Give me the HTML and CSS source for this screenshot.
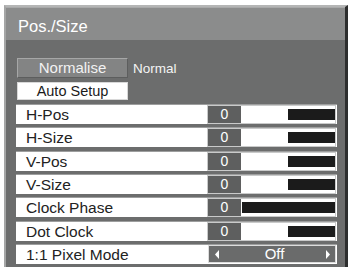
FILE: index.html
```html
<!DOCTYPE html>
<html>
<head>
<meta charset="utf-8">
<link rel="stylesheet" href="styles.css">
</head>
<body>
<div class="frame">
  <div class="title">Pos./Size</div>
  <div class="content">
    <div class="btn-line">
      <div class="btn btn-gray">Normalise</div>
      <span class="status">Normal</span>
    </div>
    <div class="btn btn-white">Auto Setup</div>
    <div class="rows">
      <div class="row"><span class="label">H-Pos</span>
        <div class="slider"><div class="val">0</div><div class="track"><div class="bar" style="width:47px"></div></div></div></div>
      <div class="row"><span class="label">H-Size</span>
        <div class="slider"><div class="val">0</div><div class="track"><div class="bar" style="width:47px"></div></div></div></div>
      <div class="row"><span class="label">V-Pos</span>
        <div class="slider"><div class="val">0</div><div class="track"><div class="bar" style="width:47px"></div></div></div></div>
      <div class="row"><span class="label">V-Size</span>
        <div class="slider"><div class="val">0</div><div class="track"><div class="bar" style="width:47px"></div></div></div></div>
      <div class="row"><span class="label">Clock Phase</span>
        <div class="slider"><div class="val">0</div><div class="track"><div class="bar" style="width:93px"></div></div></div></div>
      <div class="row"><span class="label">Dot Clock</span>
        <div class="slider"><div class="val">0</div><div class="track"><div class="bar" style="width:47px"></div></div></div></div>
      <div class="row"><span class="label">1:1 Pixel Mode</span>
        <div class="select">
          <svg class="arr" width="4" height="9" viewBox="0 0 4 9"><path d="M4 0 L0 4.5 L4 9 Z" fill="#fff"/></svg>
          <span class="opt">Off</span>
          <svg class="arr" width="4" height="9" viewBox="0 0 4 9"><path d="M0 0 L4 4.5 L0 9 Z" fill="#fff"/></svg>
        </div></div>
    </div>
  </div>
</div>
</body>
</html>
```
FILE: styles.css
```css
html, body {
  margin: 0;
  padding: 0;
  background: #fff;
  font-family: "Liberation Sans", Arial, sans-serif;
  overflow: hidden;
}
.frame {
  margin: 5px 0 0 4px;
  width: 339px;
  border-left: 2px solid #a5a6a6;
  border-top: 2px solid #b4b5b5;
  border-right: 3px solid #2d2e2e;
  background: #6c6d6d;
  height: 270px;
}
.title {
  box-sizing: border-box;
  height: 33px;
  padding-top: 5px;
  border-top: 1px solid #a8a9a9;
  background: #8b8c8c;
  color: #fff;
  font-size: 16.5px;
  line-height: 26px;
  padding-left: 12px;
}
.content {
  padding: 18px 8px 0 10px;
}
.btn-line {
  display: flex;
  align-items: center;
  height: 20px;
}
.btn {
  box-sizing: border-box;
  width: 111px;
  margin-left: 1px;
  text-align: center;
}
.btn-gray {
  height: 20px;
  background: #838484;
  border: 1px solid #a6a7a7;
  border-right-color: #5d5e5e;
  border-bottom-color: #5d5e5e;
  color: #f2f2f2;
  font-size: 15px;
  line-height: 18px;
}
.status {
  margin-left: 5px;
  color: #f4f4f4;
  font-size: 13.5px;
}
.btn-white {
  margin-top: 4px;
  height: 18px;
  background: #fff;
  border: 1px solid #d8d8d8;
  color: #1a1a1a;
  font-size: 14.5px;
  line-height: 16px;
}
.rows {
  margin-top: 5px;
  display: flex;
  flex-direction: column;
  gap: 4.33px;
}
.row {
  height: 19px;
  width: 321px;
  background: #fff;
  display: flex;
  align-items: center;
  box-shadow: 0 -1px 0 #9d9e9e;
}
.label {
  padding-left: 10px;
  width: 181px;
  color: #222;
  font-size: 15.5px;
  line-height: 19px;
}
.slider {
  display: flex;
  height: 17px;
  width: 127px;
  margin-left: 1px;
  outline: 1px solid #c9caca;
}
.val {
  width: 33px;
  background: #5e5f5f;
  color: #fff;
  font-size: 14px;
  line-height: 17px;
  text-align: center;
}
.track {
  flex: 1;
  display: flex;
  justify-content: flex-end;
  align-items: center;
  background: #fff;
}
.bar {
  height: 11px;
  background: #1b1b1b;
}
.select {
  display: flex;
  align-items: center;
  justify-content: space-between;
  box-sizing: border-box;
  height: 18px;
  width: 128px;
  margin-left: 1px;
  padding: 0 5px 0 6px;
  background: #6a6b6b;
  border: 1px solid #dcdcdc;
}
.opt {
  color: #fff;
  font-size: 15px;
  line-height: 16px;
  margin-left: 4px;
}
```
